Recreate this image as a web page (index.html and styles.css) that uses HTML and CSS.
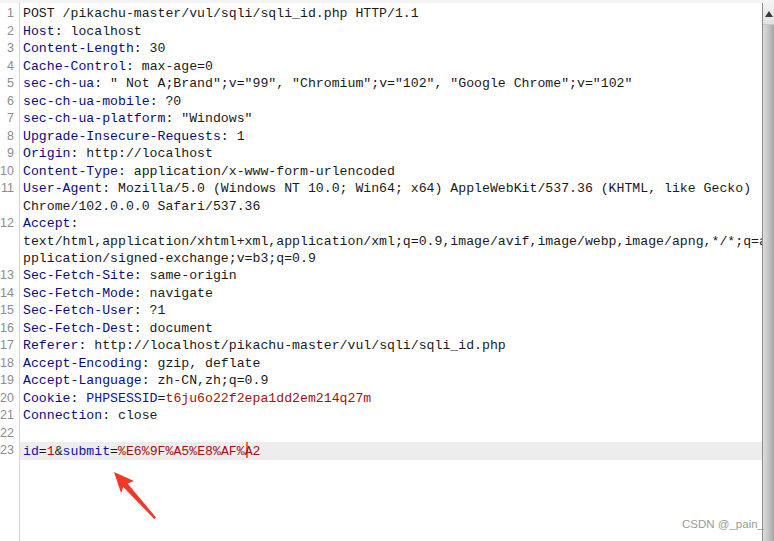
FILE: index.html
```html
<!DOCTYPE html>
<html>
<head>
<meta charset="utf-8">
<link rel="stylesheet" href="styles.css">
</head>
<body>
<div class="topband"></div>
<div class="frame">
  <div class="editor">
    <div class="line"><span class="ln">1</span><div class="txt"><div class="row">POST /pikachu-master/vul/sqli/sqli_id.php HTTP/1.1</div></div></div>
    <div class="line"><span class="ln">2</span><div class="txt"><div class="row"><span class="h">Host</span>: localhost</div></div></div>
    <div class="line"><span class="ln">3</span><div class="txt"><div class="row"><span class="h">Content-Length</span>: 30</div></div></div>
    <div class="line"><span class="ln">4</span><div class="txt"><div class="row"><span class="h">Cache-Control</span>: max-age=0</div></div></div>
    <div class="line"><span class="ln">5</span><div class="txt"><div class="row"><span class="h">sec-ch-ua</span>: " Not A;Brand";v="99", "Chromium";v="102", "Google Chrome";v="102"</div></div></div>
    <div class="line"><span class="ln">6</span><div class="txt"><div class="row"><span class="h">sec-ch-ua-mobile</span>: ?0</div></div></div>
    <div class="line"><span class="ln">7</span><div class="txt"><div class="row"><span class="h">sec-ch-ua-platform</span>: "Windows"</div></div></div>
    <div class="line"><span class="ln">8</span><div class="txt"><div class="row"><span class="h">Upgrade-Insecure-Requests</span>: 1</div></div></div>
    <div class="line"><span class="ln">9</span><div class="txt"><div class="row"><span class="h">Origin</span>: http://localhost</div></div></div>
    <div class="line"><span class="ln">10</span><div class="txt"><div class="row"><span class="h">Content-Type</span>: application/x-www-form-urlencoded</div></div></div>
    <div class="line"><span class="ln">11</span><div class="txt"><div class="row"><span class="h">User-Agent</span>: Mozilla/5.0 (Windows NT 10.0; Win64; x64) AppleWebKit/537.36 (KHTML, like Gecko)</div><div class="row">Chrome/102.0.0.0 Safari/537.36</div></div></div>
    <div class="line"><span class="ln">12</span><div class="txt"><div class="row"><span class="h">Accept</span>:</div><div class="row">text/html,application/xhtml+xml,application/xml;q=0.9,image/avif,image/webp,image/apng,*/*;q=a</div><div class="row">pplication/signed-exchange;v=b3;q=0.9</div></div></div>
    <div class="line"><span class="ln">13</span><div class="txt"><div class="row"><span class="h">Sec-Fetch-Site</span>: same-origin</div></div></div>
    <div class="line"><span class="ln">14</span><div class="txt"><div class="row"><span class="h">Sec-Fetch-Mode</span>: navigate</div></div></div>
    <div class="line"><span class="ln">15</span><div class="txt"><div class="row"><span class="h">Sec-Fetch-User</span>: ?1</div></div></div>
    <div class="line"><span class="ln">16</span><div class="txt"><div class="row"><span class="h">Sec-Fetch-Dest</span>: document</div></div></div>
    <div class="line"><span class="ln">17</span><div class="txt"><div class="row"><span class="h">Referer</span>: http://localhost/pikachu-master/vul/sqli/sqli_id.php</div></div></div>
    <div class="line"><span class="ln">18</span><div class="txt"><div class="row"><span class="h">Accept-Encoding</span>: gzip, deflate</div></div></div>
    <div class="line"><span class="ln">19</span><div class="txt"><div class="row"><span class="h">Accept-Language</span>: zh-CN,zh;q=0.9</div></div></div>
    <div class="line"><span class="ln">20</span><div class="txt"><div class="row"><span class="h">Cookie</span>: <span class="p">PHPSESSID</span>=<span class="v">t6ju6o22f2epa1dd2em214q27m</span></div></div></div>
    <div class="line"><span class="ln">21</span><div class="txt"><div class="row"><span class="h">Connection</span>: close</div></div></div>
    <div class="line"><span class="ln">22</span><div class="txt"><div class="row"> </div></div></div>
    <div class="line current"><span class="ln">23</span><div class="txt"><div class="row"><span class="p">id</span>=<span class="v">1</span>&amp;<span class="p">submit</span>=<span class="v">%E6%9F%A5%E8%AF%<span class="caret"></span>A2</span></div></div></div>
  </div>
  <div class="scrollbar">
    <div class="sb-btn"><span class="sb-arrow"></span></div>
    <div class="sb-thumb"></div>
  </div>
</div>
<svg class="arrow" width="774" height="541" viewBox="0 0 774 541">
  <polygon points="114,472 134,481 127.6,483.6 156,517.4 154.2,519 123.2,487 121,493" fill="#f1392b"/>
</svg>
<div class="watermark">CSDN @_pain_</div>
</body>
</html>
```

FILE: styles.css
```css
html, body {
  margin: 0;
  padding: 0;
  width: 774px;
  height: 541px;
  overflow: hidden;
  background: #ffffff;
}

body {
  position: relative;
}

.topband {
  height: 3px;
  background: #f4f4f4;
}

.frame {
  display: flex;
  height: 538px;
}

.editor {
  flex: 1;
  min-width: 0;
  overflow: hidden;
  padding-top: 2.3px;
  background: linear-gradient(to right, transparent 19px, #d4d4d4 19px, #d4d4d4 20px, transparent 20px);
  font-family: "Liberation Mono", "DejaVu Sans Mono", monospace;
  font-size: 13.2px;
  color: #1a1a1a;
}

.line {
  display: flex;
}

.ln {
  flex: 0 0 20px;
  box-sizing: border-box;
  padding-right: 6px;
  text-align: right;
  line-height: 17.48px;
  font-family: "Liberation Sans", Arial, sans-serif;
  font-size: 12.5px;
  color: #8c8c8c;
}

.txt {
  flex: 1;
  min-width: 0;
  overflow: hidden;
  padding-left: 3px;
}

.row {
  height: 17.48px;
  line-height: 17.48px;
  white-space: pre;
}

.current .txt {
  background: #ededed;
}

.h {
  color: #0a0a80;
}

.p {
  color: #0d0dbf;
}

.v {
  color: #a50f0f;
}

.caret {
  display: inline-block;
  width: 2px;
  height: 16px;
  margin-left: 1px;
  margin-right: -3px;
  vertical-align: -3px;
  background: #ff6a1a;
}

.scrollbar {
  flex: 0 0 12px;
  display: flex;
  flex-direction: column;
  border-left: 1px solid #8a8a8a;
  box-sizing: border-box;
}

.sb-btn {
  height: 21px;
  display: flex;
  align-items: center;
  justify-content: center;
  background: linear-gradient(to bottom, #f2f2f2, #e2e2e2);
  border-bottom: 1px solid #c8c8c8;
}

.sb-arrow {
  width: 0;
  height: 0;
  border-left: 4px solid transparent;
  border-right: 4px solid transparent;
  border-bottom: 6px solid #3a3a3a;
}

.sb-thumb {
  flex: 1;
  background: linear-gradient(to right, #dedede, #c4c4c4 50%, #a6a6a6);
}

.arrow {
  position: absolute;
  left: 0;
  top: 0;
  pointer-events: none;
}

.watermark {
  position: absolute;
  left: 682px;
  top: 518px;
  font-family: "Liberation Sans", Arial, sans-serif;
  font-size: 11.5px;
  color: #9a9a9a;
}
```
